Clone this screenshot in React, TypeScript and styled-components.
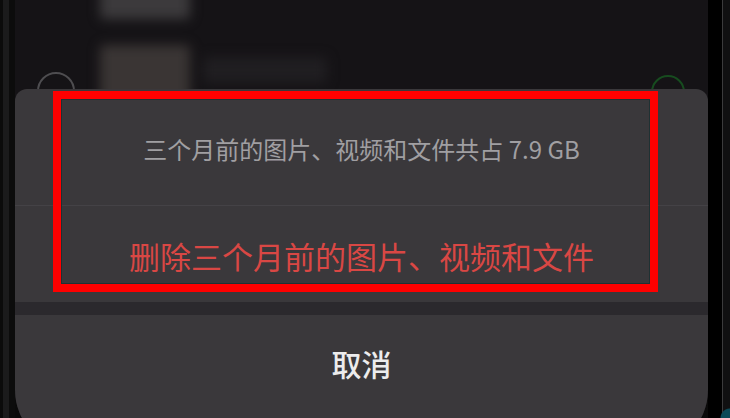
import React from "react";
import styled, { createGlobalStyle } from "styled-components";

const GlobalStyle = createGlobalStyle`
  html, body {
    margin: 0;
    padding: 0;
    background: #0a0a0a;
    overflow: hidden;
  }
  body {
    font-family: "Noto Sans CJK SC", "Noto Sans", sans-serif;
  }
`;

const Frame = styled.div`
  display: flex;
  width: 730px;
  height: 418px;
  overflow: hidden;
`;

const LeftBezel = styled.div`
  width: 15px;
  flex-shrink: 0;
  background: linear-gradient(
    90deg,
    #0b0b0b 0 3px,
    #1b1b1c 3px 9px,
    #0c0c0c 9px 15px
  );
`;

const RightBezel = styled.div`
  flex: 1;
  background:
    radial-gradient(circle at 100% 100%, #0b4a58 0 9px, transparent 10px),
    linear-gradient(90deg, #000 0 14px, #3b3b3c 14px 15px, #101011 15px);
`;

const Screen = styled.div`
  position: relative;
  width: 693px;
  height: 450px;
  flex-shrink: 0;
  background: #151316;
  border-radius: 0 0 60px 60px;
  overflow: hidden;
`;

// 시트 뒤쪽 흐릿한 목록
const List = styled.div`
  display: flex;
  flex-direction: column;
  margin-top: -52px;
  filter: blur(6px);
`;

const Row = styled.div`
  display: flex;
  align-items: flex-start;
  height: 82px;
  padding: 0 23px 0 22px;
`;

const Check = styled.div<{ $color: string; $top: number; $size: number }>`
  width: ${(p) => p.$size}px;
  height: ${(p) => p.$size}px;
  margin-top: ${(p) => p.$top}px;
  border: 2px solid ${(p) => p.$color};
  border-radius: 50%;
  box-sizing: border-box;
  flex-shrink: 0;
  filter: blur(0.5px);
`;

const Slot = styled.div`
  width: 38px;
  flex-shrink: 0;
`;

const Thumb = styled.div<{ $tint: string }>`
  width: 90px;
  height: 56px;
  margin: 15px 0 0 25px;
  background: ${(p) => p.$tint};
  border-radius: 4px;
`;

const TextBlob = styled.div`
  width: 124px;
  height: 26px;
  margin: 27px 0 0 13px;
  background: #201e21;
  border-radius: 4px;
`;

const Spacer = styled.div`
  flex: 1;
`;

const Sheet = styled.div`
  position: absolute;
  top: 89px;
  left: 0;
  right: 0;
  bottom: 0;
  display: flex;
  flex-direction: column;
  background: #3a383b;
  border-radius: 12px 12px 0 0;
`;

const InfoSection = styled.div`
  height: 116px;
  display: flex;
  align-items: center;
  justify-content: center;
  padding-top: 2px;
  box-sizing: border-box;
  font-size: 24px;
  color: #a09fa2;
`;

const Divider = styled.div`
  height: 1px;
  background: #444246;
`;

const ActionRow = styled.div<{ $tall: number }>`
  height: ${(p) => p.$tall}px;
  display: flex;
  align-items: center;
  justify-content: center;
  flex-shrink: 0;
`;

const DangerText = styled.span`
  font-size: 31px;
  color: #d94744;
  padding-top: 3px;
`;

const CancelText = styled.span`
  font-size: 30px;
  font-weight: 500;
  color: #ececed;
`;

const GapBand = styled.div`
  height: 13px;
  background: #2b292d;
  flex-shrink: 0;
`;

// 빨간 강조 상자 (주석)
const Highlight = styled.div`
  position: absolute;
  top: 91px;
  left: 38px;
  width: 605px;
  height: 201px;
  box-sizing: border-box;
  border: 8px solid #ff0000;
  box-shadow: inset 0 0 0 1px #1f3133;
  pointer-events: none;
`;

export default function App() {
  return (
    <>
      <GlobalStyle />
      <Frame>
        <LeftBezel />
        <Screen>
          <List>
            <Row>
              <Slot />
              <Thumb $tint="#3c3a3c" />
              <Spacer />
            </Row>
            <Row>
              <Slot />
              <Thumb $tint="#3a3534" />
              <TextBlob />
              <Spacer />
            </Row>
          </List>
          <CheckRow>
            <Check $color="#4e4d50" $top={0} $size={38} />
            <Spacer />
            <Check $color="#174c1f" $top={3} $size={34} />
          </CheckRow>
          <Sheet>
            <InfoSection>三个月前的图片、视频和文件共占 7.9 GB</InfoSection>
            <Divider />
            <ActionRow $tall={96}>
              <DangerText>删除三个月前的图片、视频和文件</DangerText>
            </ActionRow>
            <GapBand />
            <ActionRow $tall={96}>
              <CancelText>取消</CancelText>
            </ActionRow>
          </Sheet>
          <Highlight />
        </Screen>
        <RightBezel />
      </Frame>
    </>
  );
}

// 시트 아래로 일부만 보이는 선택 원
const CheckRow = styled.div`
  position: absolute;
  top: 72px;
  left: 22px;
  right: 23px;
  display: flex;
  align-items: flex-start;
`;
